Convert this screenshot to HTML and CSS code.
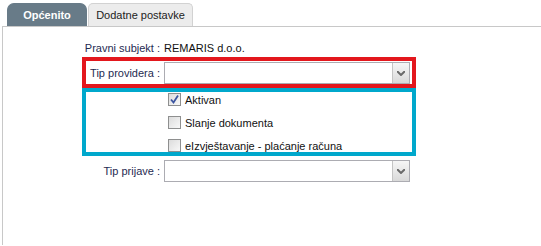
FILE: index.html
```html
<!DOCTYPE html>
<html lang="hr">
<head>
    <meta charset="UTF-8">
    <title>Postavke providera</title>
    <link rel="stylesheet" href="styles.css">
</head>
<body>

    <div class="tabs">
        <div class="tab tab-active">Općenito</div>
        <div class="tab tab-second">Dodatne postavke</div>
    </div>

    <div class="panel">
        <!-- pravni subjekt -->
        <div class="group group-first">
            <div class="row">
                <span class="label">Pravni subjekt :</span>
                <span class="value">REMARIS d.o.o.</span>
            </div>
        </div>

        <!-- tip providera (označeno crveno) -->
        <div class="group group-red">
            <div class="row">
                <span class="label">Tip providera :</span>
                <div class="select">
                    <span class="select-text"></span>
                    <span class="select-btn">
                        <svg width="8" height="5" viewBox="0 0 8 5"><path d="M0 0 L4 4 L8 0" fill="none" stroke="#6a6a6a" stroke-width="2"/></svg>
                    </span>
                </div>
            </div>
        </div>

        <!-- opcije (označeno plavo) -->
        <div class="group group-blue">
            <div class="checks">
                <label class="check">
                    <span class="box">
                        <svg width="11" height="11" viewBox="0 0 11 11"><path d="M2 5.5 L4.5 8.5 L9 1.5" fill="none" stroke="#3b55a0" stroke-width="1.8"/></svg>
                    </span>
                    Aktivan
                </label>
                <label class="check"><span class="box"></span>Slanje dokumenta</label>
                <label class="check"><span class="box"></span>eIzvještavanje - plaćanje računa</label>
            </div>
        </div>

        <!-- tip prijave -->
        <div class="group">
            <div class="row">
                <span class="label">Tip prijave :</span>
                <div class="select">
                    <span class="select-text"></span>
                    <span class="select-btn">
                        <svg width="8" height="5" viewBox="0 0 8 5"><path d="M0 0 L4 4 L8 0" fill="none" stroke="#6a6a6a" stroke-width="2"/></svg>
                    </span>
                </div>
            </div>
        </div>
    </div>

</body>
</html>
```

FILE: styles.css
```css
body {
    margin: 0;
    font-family: "Liberation Sans", Arial, sans-serif;
    font-size: 11px;
    background-color: #fff;
    color: #111;
}

/* --- tabovi --- */
.tabs {
    display: flex;
    padding: 3px 0 0 7px;
    height: 23px;
}

.tab {
    height: 23px;
    box-sizing: border-box;
    display: flex;
    align-items: center;
    justify-content: center;
    background-color: #ececec;
    border: 1px solid #d2d2d2;
    border-bottom: none;
    border-radius: 5px 5px 0 0;
    color: #222;
    margin-right: 1px;
    white-space: nowrap;
}

.tab-active {
    width: 80px;
    background-color: #687b88;
    border-color: #687b88;
    color: #fff;
    font-weight: bold;
    border-radius: 7px 7px 0 0;
}

.tab-second {
    width: 105px;
}

/* --- sadržaj --- */
.panel {
    margin-left: 2px;
    border-top: 1px solid #c8c8c8;
    border-left: 1px solid #c8c8c8;
    height: 219px;
    box-sizing: border-box;
}

.group {
    margin-left: 79px;
    width: 334px;
    box-sizing: border-box;
    border: 4px solid transparent;
}

.group-first {
    border-top: none;
    border-bottom: none;
    padding-top: 12px;
}

.group-red {
    border-color: #e3171d;
    padding-top: 1px;
}

.group-blue {
    border-color: #00a8cc;
    height: 68px;
}

.row {
    display: flex;
    align-items: center;
    min-height: 18px;
}

/* labela je poravnata desno, dugi tekst ide ulijevo */
.label {
    flex-shrink: 0;
    width: 78px;
    box-sizing: border-box;
    padding-right: 4px;
    display: flex;
    justify-content: flex-end;
    color: #1f2b52;
    white-space: nowrap;
}

.value {
    color: #111;
}

/* --- select --- */
.select {
    width: 246px;
    height: 22px;
    box-sizing: border-box;
    border: 1px solid #acacb2;
    display: flex;
    background-color: #fff;
}

.select-text {
    flex: 1;
}

.select-btn {
    width: 16px;
    border-left: 1px solid #c4c4c4;
    background: linear-gradient(#f6f6f6, #d9d9d9);
    display: flex;
    align-items: center;
    justify-content: center;
}

/* --- checkboxi --- */
.checks {
    display: flex;
    flex-direction: column;
    gap: 10px;
    padding: 1px 0 0 82px;
}

.check {
    display: flex;
    align-items: center;
    height: 13px;
    color: #111;
    white-space: nowrap;
}

.box {
    width: 13px;
    height: 13px;
    box-sizing: border-box;
    border: 1px solid #8e8f8f;
    background: linear-gradient(135deg, #dcdcdc, #f8f8f8);
    margin-right: 4px;
    display: flex;
    align-items: center;
    justify-content: center;
}
```
